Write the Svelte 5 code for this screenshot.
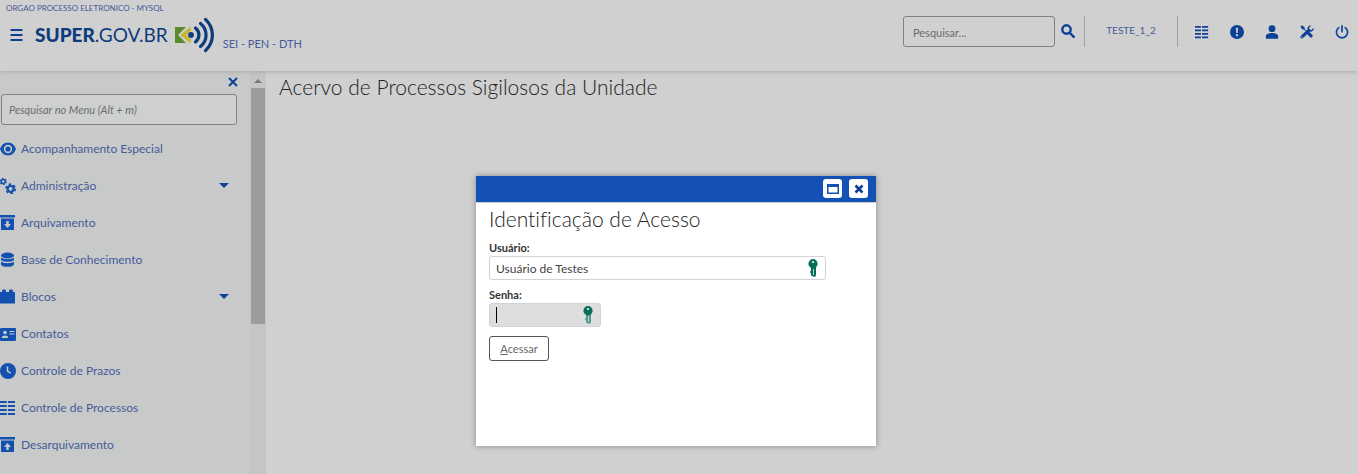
<script>
  const items = [
    { label: 'Acompanhamento Especial', icon: 'eye' },
    { label: 'Administração', icon: 'gears', sub: true },
    { label: 'Arquivamento', icon: 'archive' },
    { label: 'Base de Conhecimento', icon: 'database' },
    { label: 'Blocos', icon: 'blocks', sub: true },
    { label: 'Contatos', icon: 'card' },
    { label: 'Controle de Prazos', icon: 'clock' },
    { label: 'Controle de Processos', icon: 'list' },
    { label: 'Desarquivamento', icon: 'unarchive' }
  ];
  const actions = [
    { label: 'Controle de Processos', icon: 'list' },
    { label: 'Novidades', icon: 'alert' },
    { label: 'Usuário', icon: 'user' },
    { label: 'Configurações', icon: 'tools' },
    { label: 'Sair', icon: 'power' }
  ];
  let user = $state('Usuário de Testes');
  let password = $state('');
</script>

{#snippet glyph(name)}
  <svg class="glyph" viewBox="0 0 16 16" aria-hidden="true">
    {#if name === 'eye'}
      <path fill-rule="evenodd" d="M8 1.500C4.200 1.500 1.200 4.300 0 8c1.200 3.700 4.200 6.500 8 6.500s6.800-2.800 8-6.500c-1.200-3.700-4.200-6.500-8-6.500zm0 2.300a4.200 4.200 0 1 1 0 8.400 4.200 4.200 0 0 1 0-8.400z" />
      <circle cx="8" cy="8" r="2.600" />
    {:else if name === 'gears'}
      <circle cx="3.200" cy="3.500" r="2" fill="none" stroke="currentColor" stroke-width="1.600" />
      <circle cx="3.200" cy="3.500" r="3.100" fill="none" stroke="currentColor" stroke-width="1.200" stroke-dasharray="1.620 1.620" />
      <circle cx="10.600" cy="10.800" r="3" fill="none" stroke="currentColor" stroke-width="2.300" />
      <circle cx="10.600" cy="10.800" r="4.600" fill="none" stroke="currentColor" stroke-width="1.700" stroke-dasharray="2.410 2.410" />
    {:else if name === 'archive'}
      <path d="M0 0h15v2.500H0z" />
      <path fill-rule="evenodd" d="M1 3.500h13V15H1zM6.300 6v3H4l3.500 4L11 9H8.700V6z" />
    {:else if name === 'unarchive'}
      <path d="M0 0h15v2.500H0z" />
      <path fill-rule="evenodd" d="M1 3.500h13V15H1zM6.300 13v-3H4l3.500-4 3.500 4H8.700v3z" />
    {:else if name === 'database'}
      <ellipse cx="7.500" cy="3.500" rx="6.500" ry="3" />
      <path d="M1 5.500c2 2.300 11 2.300 13 0v2c0 3-13 3-13 0zM1 9.500c2 2.300 11 2.300 13 0v2.700c0 3.400-13 3.400-13 0z" />
    {:else if name === 'blocks'}
      <path d="M0 3h2V2q0-1.500 1-1.500h2q1 0 1 1.500v1h3V2q0-1.500 1-1.500h2q1 0 1 1.500v1h2v11.500H0z" />
    {:else if name === 'card'}
      <rect y="2" width="16" height="13" rx="1.200" />
      <g class="knock"><circle cx="5" cy="6.500" r="1.800" /><path d="M1.800 12c0-3.200 6.400-3.200 6.400 0zM9.500 5h4.700v1H9.500zM9.500 7.500h4.700v1H9.500z" /></g>
    {:else if name === 'clock'}
      <circle cx="8" cy="8" r="8" />
      <path class="cut" d="M7.500 3.500v4.700l3.200 2" />
    {:else if name === 'list'}
      <path d="M0 1h6.800v2H0zM8 1h7v2H8zM0 5h6.800v2H0zM8 5h7v2H8zM0 9h6.800v2H0zM8 9h7v2H8zM0 13h6.800v2H0zM8 13h7v2H8z" />
    {:else if name === 'alert'}
      <circle cx="8" cy="8" r="8" />
      <path class="knock" d="M6.800 3h2.400l-.300 6H7.100z" /><circle class="knock" cx="8" cy="11.700" r="1.300" />
    {:else if name === 'user'}
      <circle cx="8" cy="4.200" r="3.900" /><path d="M1 15.800V13c0-5 14-5 14 0v2.800z" />
    {:else if name === 'tools'}
      <path d="M.500 2 2.200.300 5.300 2.600v1.800l2.900 2.900c.800-.400 1.700-.200 2.400.400l4.400 4.500-2.500 2.600L8 10.300c-.700-.700-.800-1.600-.500-2.300L4.500 5.100H2.700z" />
      <path d="M15.600 3.200 13.200 5.600l-2.200-.500-.500-2.200L12.900.500C10 0 8 2.300 8.700 5L1 12.400c-1.600 1.600.8 4.200 2.500 2.500L11 7.600c2.900.7 5.200-1.600 4.600-4.400z" />
      <circle class="knock" cx="2.400" cy="13.500" r=".7" />
    {:else if name === 'power'}
      <path fill="none" stroke="currentColor" stroke-width="1.900" stroke-linecap="round" d="M8 1v6.800M4.300 3a6.400 6.400 0 1 0 7.400 0" />
    {/if}
  </svg>
{/snippet}

{#snippet key(solid)}
  <svg class="key" viewBox="0 0 10 18" aria-hidden="true">
    <circle cx="5" cy="4.700" r="4.600" />
    <path d="M3 8h5v8.500L6.500 18 3 16.500V14l-1-.500v-1l1-.500z" opacity={solid ? 1 : 0.65} />
    <path class="hole" d="M5.500 10v6" /><circle class="hole-dot" cx="5" cy="3" r="1" />
  </svg>
{/snippet}

<div class="app">
  <header>
    <div class="left">
      <div class="org">ORGAO PROCESSO ELETRONICO - MYSQL</div>
      <div class="brand">
        <button class="burger" aria-label="Menu">
          <svg viewBox="0 0 12 12"><path d="M0 1h12M0 6h12M0 11h12" /></svg>
        </button>
        <a class="logo" href="#inicio">
          <span class="word"><b>SUPER</b><span>.GOV.BR</span></span>
          <svg viewBox="0 0 40 36" aria-hidden="true">
            <path fill="#5a8a2c" d="M0 10h11v16H0z" />
            <path fill="#d0d0d0" d="M3 18 12 9v18z" />
            <path fill="#c9b637" d="M5 18 16 9.500v4L11.500 18l4.500 4.500v4z" />
            <circle cx="16" cy="18" r="2.900" fill="#0c3c7c" />
            <path fill="none" stroke="#0c3c7c" stroke-width="3.200" stroke-linecap="round" d="M20.500 11c4.600 4 4.600 10 0 14M25.500 6.500c7.400 6 7.400 17 0 23M30.500 2.400c9.200 8.800 9.200 22.400 0 31.200" />
          </svg>
        </a>
        <span class="system">SEI - PEN - DTH</span>
      </div>
    </div>
    <div class="right">
      <input class="search" type="text" placeholder="Pesquisar..." aria-label="Pesquisar" />
      <button class="find" aria-label="Pesquisar">
        <svg viewBox="0 0 14 14"><circle cx="5.500" cy="5.500" r="4.200" /><path d="m8.800 8.800 4 4" /></svg>
      </button>
      <a class="unit" href="#unidade">TESTE_1_2</a>
      <nav class="actions">
        {#each actions as action}
          <button aria-label={action.label}>{@render glyph(action.icon)}</button>
        {/each}
      </nav>
    </div>
  </header>

  <div class="body">
    <aside>
      <div class="menu">
        <button class="close" aria-label="Fechar menu"><svg viewBox="0 0 10 10"><path d="m1 1 8 8M9 1 1 9" /></svg></button>
        <input class="filter" type="text" placeholder="Pesquisar no Menu (Alt + m)" aria-label="Pesquisar no Menu" />
        <ul>
          {#each items as item}
            <li>
              <a href="#menu">{@render glyph(item.icon)}<span>{item.label}</span>
                {#if item.sub}<i class="caret-down"></i>{/if}
              </a>
            </li>
          {/each}
        </ul>
      </div>
      <div class="scroll" aria-hidden="true"><i class="up"></i><i class="thumb"></i></div>
    </aside>
    <main><h1>Acervo de Processos Sigilosos da Unidade</h1></main>
  </div>

  <div class="overlay">
    <div class="dialog" role="dialog" aria-labelledby="dialog-title">
      <div class="bar">
        <button aria-label="Maximizar"><svg viewBox="0 0 12 10"><path fill-rule="evenodd" d="M0 0h12v10H0zM1.500 3v5.500h9V3z" /></svg></button>
        <button aria-label="Fechar"><svg class="x" viewBox="0 0 10 10"><path d="m1.500 1.500 7 7M8.500 1.500l-7 7" /></svg></button>
      </div>
      <form onsubmit={(event) => event.preventDefault()}>
        <h2 id="dialog-title">Identificação de Acesso</h2>
        <label for="user">Usuário:</label>
        <div class="field user"><input id="user" type="text" bind:value={user} />{@render key(true)}</div>
        <label for="password">Senha:</label>
        <div class="field password"><input id="password" type="password" bind:value={password} /><i class="cursor"></i>{@render key(false)}</div>
        <button class="submit"><span><u>A</u>cessar</span></button>
      </form>
    </div>
  </div>
</div>

<style>
  :global(body) { margin: 0; background: #d0d0d0; }
  .app { position: relative; height: 100vh; overflow: hidden; display: flex; flex-direction: column; font: 12px/16px Lato, sans-serif; font-variant-ligatures: no-common-ligatures; color: #465b98; }
  * { box-sizing: border-box; }
  a { color: inherit; text-decoration: none; }
  button { padding: 0; border: 0; background: none; color: #0c4196; font: inherit; display: flex; align-items: center; justify-content: center; }
  input { font: inherit; color: #444; }
  .glyph { width: 16px; height: 16px; fill: currentColor; flex: none; }
  .knock { fill: #cacccc; }
  .cut { fill: none; stroke: #cacccc; stroke-width: 1.500; }

  header { position: relative; display: flex; justify-content: space-between; flex: none; height: 71px; background: #d0d0d0; box-shadow: 0 1px 4px #aaa; z-index: 1; }
  .org { padding: 2px 0 0 6px; font-size: 8px; line-height: 12px; }
  .brand { display: flex; padding: 3px 0 0 10px; }
  .burger { width: 13px; height: 36px; }
  .burger svg { width: 13px; height: 12px; stroke: #0c4196; stroke-width: 2; }
  .logo { display: flex; align-items: center; gap: 7px; margin-left: 12px; color: #0c3c7c; }
  .logo svg { width: 40px; height: 36px; }
  .word { font-size: 19px; line-height: 36px; white-space: nowrap; }
  .word b { font-weight: 900; }
  .system { margin: 19px 0 0 8px; font-size: 11px; }
  .right { display: flex; padding: 16px 9px 0 0; }
  .search { width: 152px; height: 31px; padding: 2px 9px 0; border: 1px solid #808284; border-radius: 3px; background: transparent; font-size: 11px; }
  input::placeholder { color: #6b6d70; opacity: 1; }
  .find { width: 29px; height: 29px; padding-right: 3px; }
  .find svg { width: 14px; height: 14px; fill: none; stroke: #0c4196; stroke-width: 2.400; stroke-linecap: round; }
  .unit { width: 94px; height: 31px; line-height: 29px; text-align: center; border: solid #a0a0a0; border-width: 0 1px; font-size: 10px; }
  .actions { display: flex; gap: 21px; padding: 9px 0 0 17px; height: 24px; }
  .actions button { width: 14px; height: 14px; }
  .actions .glyph { width: 14px; height: 14px; }

  .body { display: flex; flex: 1; min-height: 0; }
  aside { display: flex; flex: none; width: 266px; background: #c8caca; }
  .menu { flex: 1; padding: 5px 12px 0 0; min-width: 0; overflow: hidden; }
  .close { width: 11px; height: 11px; margin-left: auto; }
  .close svg { width: 10px; height: 10px; stroke: #0c4196; stroke-width: 2; }
  .filter { display: block; width: 236px; height: 31px; margin: 7px 0 5px 1px; padding: 0 7px; border: 1px solid #808284; border-radius: 3px; background: #cecfcf; font-style: italic; font-size: 11px; }
  ul { list-style: none; margin: 0; padding: 0; }
  li a { display: flex; align-items: center; gap: 6px; height: 37px; padding-right: 9px; }
  li .glyph { width: 16px; margin-right: -1px; color: #1450af; }
  .caret-down { margin-left: auto; border: solid transparent; border-width: 5px 5px 0; border-top-color: #0c4196; }
  .scroll { width: 16px; background: #c5c5c5; padding: 8px 1px 0; }
  .up { display: block; width: 8px; margin: 0 auto 5px; border: solid transparent; border-width: 0 4px 4px; border-bottom-color: #777; }
  .thumb { display: block; height: 236px; background: #9c9c9c; }
  main { padding: 3px 13px; }
  h1, h2 { margin: 0; font-weight: 300; font-size: 21px; line-height: 26px; color: #222; }

  .overlay { position: absolute; inset: 0; z-index: 2; display: flex; align-items: flex-start; justify-content: center; padding: 176px 6px 0 0; }
  .dialog { width: 400px; min-height: 270px; background: #fff; box-shadow: 0 0 6px #888; }
  .bar { display: flex; justify-content: flex-end; align-items: center; gap: 7px; height: 27px; padding: 0 8px 1px 0; background: #1351b4; border-bottom: 1px solid #ccc; }
  .bar button { width: 19px; height: 19px; border-radius: 3px; background: #fff; }
  .bar svg { width: 12px; height: 10px; fill: #1351b4; }
  .bar .x { width: 10px; stroke: #0c4196; stroke-width: 2.600; }
  form { padding: 3px 13px; color: #333; }
  h2 + label { margin-top: 8px; }
  label { display: block; margin-top: 7px; line-height: 16px; font-weight: 700; color: #333; font-size: 11px; }
  .field { position: relative; height: 24px; }
  .field input { display: block; width: 100%; height: 24px; padding: 0 28px 0 6px; border: 1px solid #ced4da; border-radius: 3px; background: #fff; outline: 0; }
  .user { width: 337px; }
  .password { width: 112px; }
  .password input { background: #dedede; }
  .key { position: absolute; right: 8px; top: 3px; width: 10px; height: 18px; fill: #086e5c; }
  .hole { stroke: #b7d4ce; stroke-width: 1; }
  .hole-dot { fill: #fff; }
  .cursor { position: absolute; left: 7px; top: 4px; width: 1px; height: 16px; background: #000; }
  .submit { margin-top: 9px; width: 60px; height: 25px; border: 1px solid #555; border-radius: 3px; color: #666; background: #fff; font-size: 11px; }
</style>
